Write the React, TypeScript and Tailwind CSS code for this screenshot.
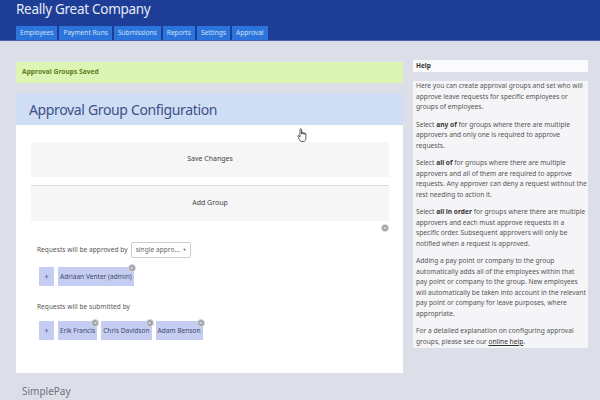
import React from "react";

function X({ className = "" }: { className?: string }) {
  return (
    <span className={`absolute w-[8px] h-[8px] rounded-full bg-[#9a9ea6] border border-[#d8dae0] flex items-center justify-center text-white text-[6px] leading-none ${className}`}>
      ×
    </span>
  );
}

function Chip({ name, top }: { name: string; top: string }) {
  return (
    <div className="relative h-[19px] px-[2px] bg-[#c5cdf3] flex items-center text-[6.6px] text-[#3f4a66] whitespace-nowrap">
      {name}
      <X className={`${top} -right-[2px]`} />
    </div>
  );
}

function Plus() {
  return (
    <div className="w-[15px] h-[19px] bg-[#c5cdf3] flex items-center justify-center text-[8px] text-[#4a5578]">+</div>
  );
}

const tabs = ["Employees", "Payment Runs", "Submissions", "Reports", "Settings", "Approval"];

export default function App() {
  return (
    <div className="relative w-[600px] h-[400px] overflow-hidden bg-[#dddfe8] font-['Noto_Sans',sans-serif] flex flex-col">
      <header className="h-[41px] bg-[#1e3d96] pl-[16px] flex flex-col border-b border-[#4a63a8] shrink-0">
        <div className="h-[27px] text-[13.5px] leading-[18px] text-[#e6ebf7] tracking-[-0.28px]">Really Great Company</div>
        <nav className="flex gap-[2px]">
          {tabs.map((t) => (
            <div key={t} className="h-[14px] px-[4px] bg-[#2b74dc] text-[#cfe0f7] text-[6.6px] leading-[14px] whitespace-nowrap">{t}</div>
          ))}
        </nav>
      </header>
      <main className="flex gap-[10px] pl-[16px] pt-[19px] items-start">
        <div className="w-[387px] pt-[2px] flex flex-col gap-[10px] shrink-0">
          <div className="h-[21px] bg-[#dcf5b4] pl-[6px] flex items-center text-[6.7px] font-bold text-[#5e7d22]">Approval Groups Saved</div>
          <section className="bg-white h-[280px] flex flex-col">
            <h1 className="h-[32px] bg-[#cfdef5] pl-[13px] flex items-center text-[14px] text-[#3c5088] tracking-[-0.35px]">Approval Group Configuration</h1>
            <div className="pt-[17px] px-[15px] flex flex-col">
              <button className="h-[35px] bg-[#f6f6f6] text-[7px] text-[#444] mr-[-1px]">Save Changes</button>
              <button className="h-[36px] mt-[8px] bg-[#f6f6f6] text-[7px] text-[#444] mr-[-1px] border-t border-[#dcdcdc]">Add Group</button>
              <div className="relative h-[21px]">
                <X className="top-[3px] -right-[1px]" />
              </div>
              <div className="flex items-center gap-[3px] text-[6.5px] tracking-[0.07px] text-[#555] h-[16px] pl-[6px]">
                <span>Requests will be approved by</span>
                <div className="w-[60px] h-[16px] bg-white border border-[#cccccc] rounded-[2px] flex items-center justify-between pl-[4px] pr-[3px] text-[#666] whitespace-nowrap">
                  <span>single appro...</span>
                  <span className="text-[4px]">▼</span>
                </div>
              </div>
              <div className="flex gap-[4px] mt-[9px] pl-[8px]">
                <Plus />
                <Chip name="Adriaan Venter (admin)" top="-top-[3px]" />
              </div>
              <div className="text-[6.5px] tracking-[0.07px] text-[#555] mt-[14px] pl-[6px] h-[14px] leading-[14px]">Requests will be submitted by</div>
              <div className="flex gap-[4px] mt-[7px] pl-[8px]">
                <Plus />
                <Chip name="Erik Francis" top="-top-[2px]" />
                <Chip name="Chris Davidson" top="-top-[2px]" />
                <Chip name="Adam Benson" top="-top-[2px]" />
              </div>
            </div>
          </section>
          <div className="pl-[6px] mt-[1px] text-[10px] leading-[14px] text-[#6b7280]">SimplePay</div>
        </div>
        <aside className="w-[175px] shrink-0 flex flex-col gap-[9px]">
          <div className="h-[12px] bg-[#fbfbfd] pl-[3px] flex items-center text-[6.5px] font-bold text-[#333]">Help</div>
          <div className="h-[267px] bg-[#f5f5f8] rounded-b-[2px] pl-[3px] pr-[1px] text-[6.65px] leading-[10.5px] text-[#555] flex flex-col gap-[7px]">
            <p>Here you can create approval groups and set who will approve leave requests for specific employees or groups of employees.</p>
            <p>Select <b className="text-[#333]">any of</b> for groups where there are multiple approvers and only one is required to approve requests.</p>
            <p>Select <b className="text-[#333]">all of</b> for groups where there are multiple approvers and all of them are required to approve requests. Any approver can deny a request without the rest needing to action it.</p>
            <p>Select <b className="text-[#333]">all in order</b> for groups where there are multiple approvers and each must approve requests in a specific order. Subsequent approvers will only be notified when a request is approved.</p>
            <p>Adding a pay point or company to the group automatically adds all of the employees within that pay point or company to the group. New employees will automatically be taken into account in the relevant pay point or company for leave purposes, where appropriate.</p>
            <p>For a detailed explanation on configuring approval groups, please see our <span className="underline text-[#333]">online help</span>.</p>
          </div>
        </aside>
      </main>
      <svg className="absolute left-[297px] top-[128px]" width="11" height="15" viewBox="0 0 11 15">
        <path d="M3 1.500c0-1 1.600-1 1.600 0V6l.1-1.200c0-.9 1.400-.9 1.400 0V6.200l.1-.9c0-.8 1.300-.8 1.300 0v1l.1-.5c0-.7 1.300-.7 1.300 0V10c0 2-1 3.500-2.500 3.500H5C3.500 13.500 2.800 12.500 2 11L.9 8.500c-.4-.9.700-1.500 1.300-.6L3 9z" fill="#fff" stroke="#333" strokeWidth="0.8" />
      </svg>
    </div>
  );
}
